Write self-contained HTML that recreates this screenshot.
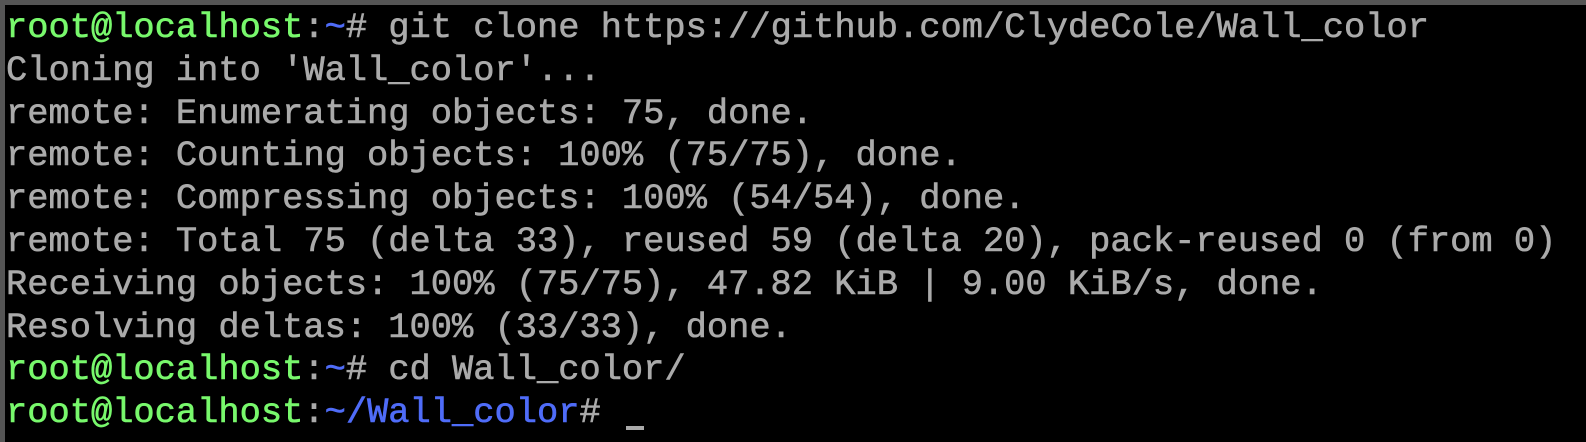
<!DOCTYPE html>
<html><head><meta charset="utf-8"><style>
html,body{margin:0;padding:0;background:#000;width:1586px;height:442px;overflow:hidden}
.t{position:absolute;left:0;top:0;width:1586px;height:442px;border-top:5px solid #555;border-left:5px solid #555;box-sizing:border-box;background:#000}
pre{margin:0;position:absolute;left:1px;top:2px;font-family:"Liberation Mono",monospace;font-size:35.4px;line-height:42.8px;color:#aaa;font-weight:normal;letter-spacing:0;-webkit-text-stroke:0.6px currentColor}
.g{color:#78f86c}.b{color:#4f6cf8}
.c{display:inline-block;width:18px;height:4px;background:#aaa;vertical-align:-8px;margin-left:4px}
</style></head><body><div class="t"><pre><span class="g">root@localhost</span>:<span class="b">~</span># git clone https://github.com/ClydeCole/Wall_color
Cloning into 'Wall_color'...
remote: Enumerating objects: 75, done.
remote: Counting objects: 100% (75/75), done.
remote: Compressing objects: 100% (54/54), done.
remote: Total 75 (delta 33), reused 59 (delta 20), pack-reused 0 (from 0)
Receiving objects: 100% (75/75), 47.82 KiB | 9.00 KiB/s, done.
Resolving deltas: 100% (33/33), done.
<span class="g">root@localhost</span>:<span class="b">~</span># cd Wall_color/
<span class="g">root@localhost</span>:<span class="b">~/Wall_color</span># <span class="c"></span></pre></div></body></html>
